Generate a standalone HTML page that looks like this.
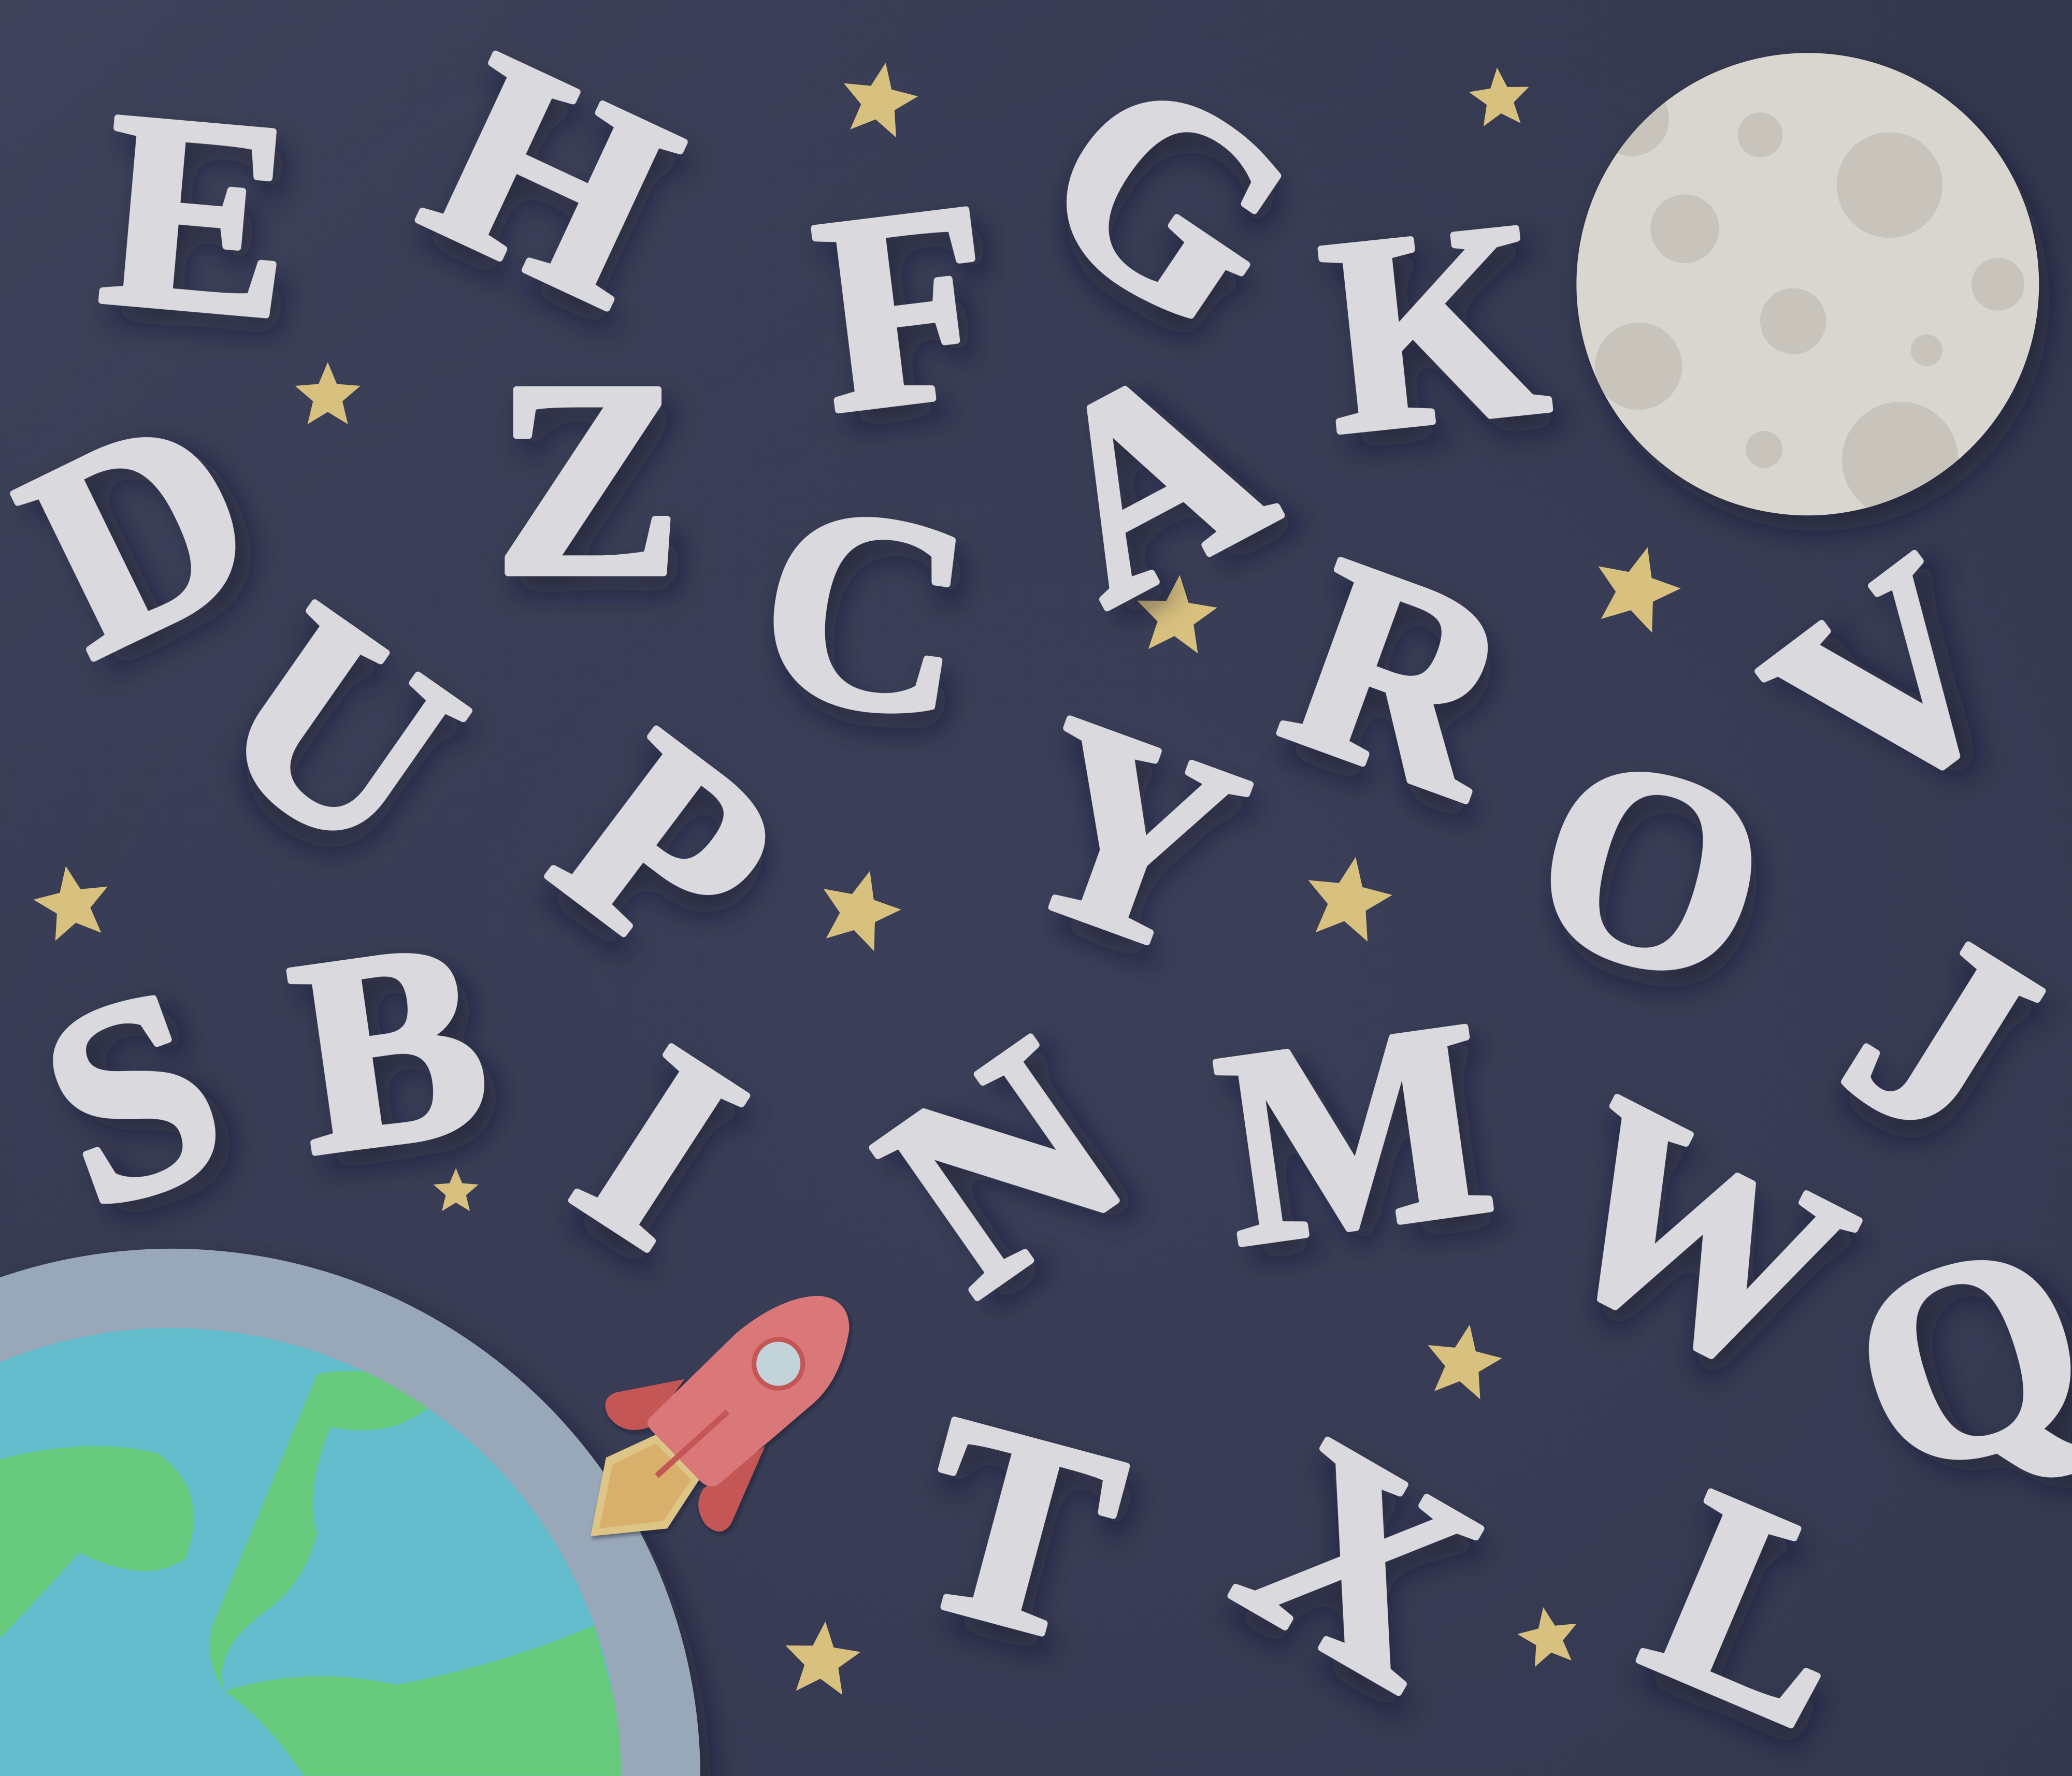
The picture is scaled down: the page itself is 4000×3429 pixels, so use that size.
<!DOCTYPE html>
<html><head><meta charset="utf-8"><style>
html,body{margin:0;padding:0;width:4000px;height:3429px;overflow:hidden;background:#3a3e56}
svg{display:block}
text{font-family:"Liberation Serif",serif;font-weight:bold;fill:#d9d9de;stroke:#d9d9de;stroke-width:5;stroke-linejoin:round;font-size:212px;text-anchor:middle;dominant-baseline:central}
</style></head><body>
<svg width="4000" height="3429" viewBox="0 0 1568 1344" xmlns="http://www.w3.org/2000/svg" style="position:absolute;left:0;top:0">
<defs>
<radialGradient id="bg" cx="0.5" cy="0.55" r="0.8">
<stop offset="0" stop-color="#3b3f59"/><stop offset="1" stop-color="#33374d"/></radialGradient>
<linearGradient id="bg2" x1="0" y1="0" x2="1" y2="1"><stop offset="0" stop-color="#464a63" stop-opacity=".6"/><stop offset=".5" stop-color="#3b3f58" stop-opacity="0"/></linearGradient>
<filter id="sh" x="-20%" y="-20%" width="150%" height="150%"><feDropShadow dx="8" dy="12" stdDeviation="10" flood-color="#151826" flood-opacity="0.5"/></filter>
<polygon id="st" fill="#d8c07e" points="0,-1 0.265,-0.364 0.951,-0.309 0.428,0.139 0.588,0.809 0,0.45 -0.588,0.809 -0.428,0.139 -0.951,-0.309 -0.265,-0.364"/>
<clipPath id="ec"><circle cx="130" cy="1345" r="340"/></clipPath>
<clipPath id="mc"><circle cx="1368" cy="215" r="175"/></clipPath>
</defs>
<rect width="1568" height="1344" fill="url(#bg)"/>
<rect width="1568" height="1344" fill="url(#bg2)"/>

<g>
<use href="#st" transform="translate(665,77) scale(30) rotate(10)"/>
<use href="#st" transform="translate(1135,75) scale(24) rotate(-5)"/>
<use href="#st" transform="translate(248,300) scale(26)"/>
<use href="#st" transform="translate(890,467) scale(32) rotate(5)"/>
<use href="#st" transform="translate(1238,447) scale(34) rotate(15)"/>
<use href="#st" transform="translate(55,685) scale(30) rotate(-10)"/>
<use href="#st" transform="translate(650,690) scale(32) rotate(15)"/>
<use href="#st" transform="translate(1020,682) scale(34) rotate(10)"/>
<use href="#st" transform="translate(345,902) scale(18)"/>
<use href="#st" transform="translate(1107,1032) scale(30) rotate(10)"/>
<use href="#st" transform="translate(622,1257) scale(30) rotate(5)"/>
<use href="#st" transform="translate(1172,1240) scale(24) rotate(-10)"/>
</g>

<circle cx="1368" cy="215" r="175" fill="#d9d6cf" filter="url(#sh)"/>
<g fill="#c8c4bc" clip-path="url(#mc)">
<circle cx="1430" cy="140" r="40"/><circle cx="1332" cy="102" r="17"/><circle cx="1275" cy="173" r="26"/>
<circle cx="1357" cy="243" r="25"/><circle cx="1512" cy="215" r="20"/><circle cx="1458" cy="265" r="12"/>
<circle cx="1240" cy="277" r="33"/><circle cx="1335" cy="340" r="14"/><circle cx="1438" cy="348" r="44"/>
<circle cx="1235" cy="90" r="28"/></g>

<circle cx="130" cy="1345" r="400" fill="#98a8b8" filter="url(#sh)"/>
<circle cx="130" cy="1345" r="340" fill="#63bccb"/>
<g clip-path="url(#ec)" fill="#66c97c">
<path d="M-20,1110 Q60,1085 120,1100 Q160,1130 140,1180 Q110,1200 60,1175 Q20,1220 -20,1260 Z"/>
<path d="M240,1040 Q290,1030 330,1060 Q300,1090 250,1080 Q230,1130 240,1160 Q230,1200 200,1220 Q160,1250 170,1280 Q230,1260 300,1275 Q380,1260 450,1230 L480,1344 L230,1344 Q200,1300 170,1280 Q150,1250 165,1220 Z"/>
</g>

<g filter="url(#sh)" transform="translate(431,948) scale(0.145)">
<path d="M600,660 L240,730 Q160,760 200,850 Q280,960 420,910 Z" fill="#c45756"/>
<path d="M1020,1010 L850,1400 Q800,1500 710,1420 Q640,1320 700,1230 Z" fill="#c45756"/>
<polygon points="190,1070 450,950 680,1180 510,1440 110,1480" fill="#dcc586"/>
<polygon points="225,1105 450,995 635,1185 490,1400 155,1440" fill="#d8b06c"/>
<path d="M420,860 L870,420 Q1100,230 1300,225 Q1460,240 1460,400 Q1420,650 1280,780 L800,1190 Q740,1250 680,1190 L430,930 Q390,890 420,860 Z" fill="#da7879"/>
<line x1="455" y1="1165" x2="825" y2="830" stroke="#c45756" stroke-width="30"/>
<circle cx="1090" cy="580" r="140" fill="#c45756"/>
<circle cx="1090" cy="580" r="115" fill="#c3d3da"/>
</g>

<text filter="url(#sh)" transform="translate(150,162) rotate(5)">E</text>
<text filter="url(#sh)" transform="translate(418,135) rotate(25)">H</text>
<text filter="url(#sh)" transform="translate(685,232) rotate(-7)">F</text>
<text filter="url(#sh)" transform="translate(885,150) rotate(34)">G</text>
<text filter="url(#sh)" transform="translate(1085,247) rotate(-6)">K</text>
<text filter="url(#sh)" transform="translate(445,362)">Z</text>
<text filter="url(#sh)" transform="translate(105,402) rotate(-26)">D</text>
<text filter="url(#sh)" transform="translate(870,362) rotate(-28)">A</text>
<text filter="url(#sh)" transform="translate(655,462) rotate(8)">C</text>
<text filter="url(#sh)" transform="translate(1060,512) rotate(20)">R</text>
<text filter="url(#sh)" transform="translate(1430,517) rotate(-37)">V</text>
<text filter="url(#sh)" transform="translate(258,552) rotate(35)">U</text>
<text filter="url(#sh)" transform="translate(505,642) rotate(37)">P</text>
<text filter="url(#sh)" transform="translate(855,632) rotate(20)">Y</text>
<text filter="url(#sh)" transform="translate(1250,657) rotate(15)">O</text>
<text filter="url(#sh)" transform="translate(100,830) rotate(-20)">S</text>
<text filter="url(#sh)" transform="translate(295,792) rotate(-8)">B</text>
<text filter="url(#sh)" transform="translate(500,867) rotate(33)">I</text>
<text filter="url(#sh)" transform="translate(758,882) rotate(-35)">N</text>
<text filter="url(#sh)" transform="translate(1025,857) rotate(-8)">M</text>
<text filter="url(#sh)" transform="translate(1470,782) rotate(32)">J</text>
<text filter="url(#sh)" transform="translate(1285,937) rotate(27)">W</text>
<text filter="url(#sh)" transform="translate(1490,1027) rotate(-18)">Q</text>
<text filter="url(#sh)" transform="translate(770,1157) rotate(15)">T</text>
<text filter="url(#sh)" transform="translate(1030,1182) rotate(30)">X</text>
<text filter="url(#sh)" transform="translate(1330,1217) rotate(23)">L</text>
</svg>
</body></html>
